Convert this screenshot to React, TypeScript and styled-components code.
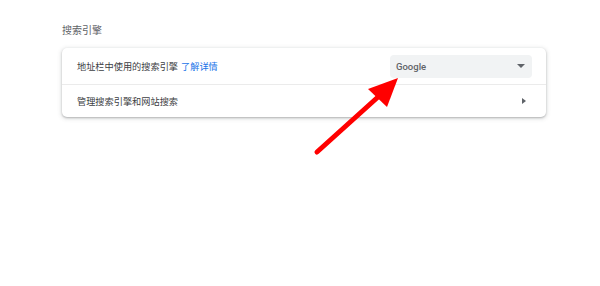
import React from "react";
import styled, { createGlobalStyle } from "styled-components";

const Global = createGlobalStyle`
  html, body { margin: 0; padding: 0; background: #ffffff; }
  body { font-family: Roboto, "Noto Sans CJK SC", "Noto Sans", sans-serif; }
`;

const Page = styled.div`
  position: relative;
  width: 600px;
  height: 286px;
  overflow: hidden;
  box-sizing: border-box;
  padding: 24px 0 0 62px;
`;

const Title = styled.div`
  font-size: 10px;
  line-height: 14px;
  color: #5f6368;
  height: 14px;
  margin-bottom: 10px;
`;

const Card = styled.div`
  width: 484px;
  border-radius: 5px;
  background: #fff;
  box-shadow: 0 1px 2px rgba(60, 64, 67, 0.3), 0 1px 4px 1px rgba(60, 64, 67, 0.15);
  display: flex;
  flex-direction: column;
`;

const Row = styled.div<{ $divider?: boolean; $h: number }>`
  display: flex;
  align-items: center;
  height: ${(p) => p.$h}px;
  padding: 0 14px 0 15px;
  border-top: ${(p) => (p.$divider ? "1px solid #ebebeb" : "none")};
  font-size: 9.2px;
  color: #3c4043;
  font-family: "Noto Sans CJK SC", sans-serif;
`;

const Label = styled.div`
  flex: 1;
`;

const Link = styled.span`
  color: #1a73e8;
  margin-left: 3px;
`;

const Select = styled.div`
  width: 142px;
  height: 23px;
  border-radius: 4px;
  background: #f1f3f4;
  display: flex;
  align-items: center;
  justify-content: space-between;
  padding: 0 6px 0 6px;
  box-sizing: border-box;
  font-family: Roboto, sans-serif;
  font-weight: 500;
  font-size: 9.5px;
  color: #5f6368;
`;

const Caret = styled.div`
  width: 0;
  height: 0;
  border-left: 4px solid transparent;
  border-right: 4px solid transparent;
  border-top: 4px solid #5f6368;
  margin-right: 1px;
`;

const Chevron = styled.div`
  width: 0;
  height: 0;
  border-top: 3.5px solid transparent;
  border-bottom: 3.5px solid transparent;
  border-left: 4px solid #5f6368;
  margin-right: 6px;
`;

const ArrowOverlay = styled.svg`
  position: absolute;
  left: 0;
  top: 0;
  pointer-events: none;
`;

export default function App() {
  return (
    <>
      <Global />
      <Page>
        <Title>搜索引擎</Title>
        <Card>
          <Row $h={36}>
            <Label>
              地址栏中使用的搜索引擎<Link>了解详情</Link>
            </Label>
            <Select>
              <span>Google</span>
              <Caret />
            </Select>
          </Row>
          <Row $divider $h={32}>
            <Label>管理搜索引擎和网站搜索</Label>
            <Chevron />
          </Row>
        </Card>
        <ArrowOverlay width="600" height="286" viewBox="0 0 600 286">
          <line x1="317" y1="152" x2="378" y2="97" stroke="#ff0000" strokeWidth="5" strokeLinecap="round" />
          <polygon points="398,78 368,89 387,107" fill="#ff0000" />
        </ArrowOverlay>
      </Page>
    </>
  );
}
